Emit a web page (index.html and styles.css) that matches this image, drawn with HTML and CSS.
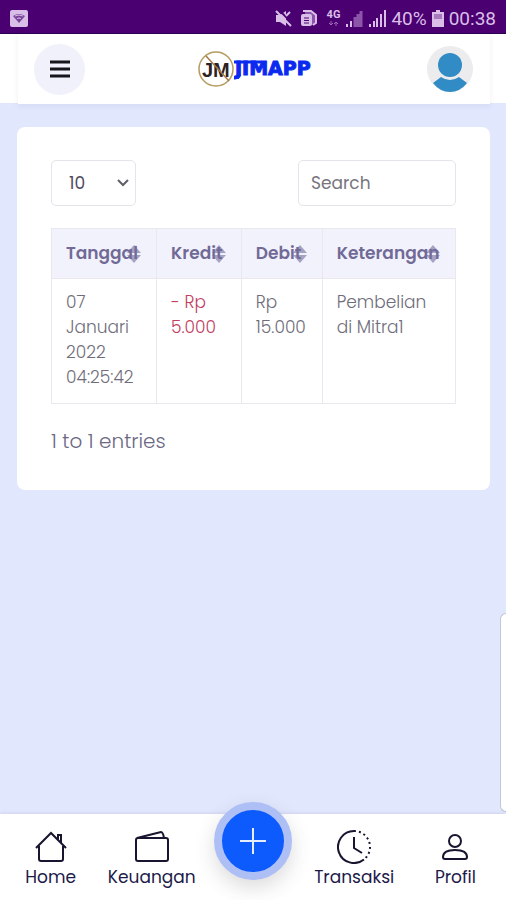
FILE: index.html
```html
<!DOCTYPE html>
<html lang="id">
<head>
<meta charset="utf-8">
<meta name="viewport" content="width=device-width, initial-scale=1">
<title>JIMAPP</title>
<link rel="stylesheet" href="styles.css">
</head>
<body>
<div class="status">
  <svg class="status-note" width="18" height="17" viewBox="0 0 18 17" aria-hidden="true">
    <rect width="18" height="17" rx="2" fill="#d9bfe8"/>
    <path d="M3 6q6-4 12 0L9 13z" fill="#77459a"/><path d="M5 6q4-2 8 0M7 8.500q2-1 4 0" stroke="#d9bfe8" fill="none"/>
  </svg>
  <div class="status-right">
    <svg width="17" height="17" viewBox="0 0 17 17" fill="#d9bfe8" aria-hidden="true">
      <path d="M1 5h4l6-4v15l-6-4H1z"/><path d="M4 0l13 13" stroke="#4b0072" stroke-width="2"/><path d="M1 1l15 15M11 6l4-4" stroke="#d9bfe8" stroke-width="2"/>
    </svg>
    <svg class="gap-docs" width="17" height="17" viewBox="0 0 17 17" aria-hidden="true">
      <path d="M5 1h7l4 4v8l-2 2H5z" fill="#8d55aa"/><rect x="1" y="4" width="11" height="12" rx="2" fill="#d9bfe8"/><path d="M4 8h5M4 10.500h5M4 13h5" stroke="#4b0072"/><path d="M3 1h8l5 4v8l-3 2" fill="none" stroke="#d9bfe8" stroke-width="2"/>
    </svg>
    <span class="network"><span>4G</span><svg width="10" height="5" viewBox="0 0 10 5" aria-hidden="true"><path d="M3 0v4M1 2l2 2 2-2M8 5V1M6 3l2-2 2 2" fill="none" stroke="#9e68bb"/></svg></span>
    <svg class="gap-signal" width="18" height="17" viewBox="0 0 18 17" aria-hidden="true"><path d="M2 14v3M6 11v6" stroke="#d9bfe8" stroke-width="2"/><path d="M10 7v10M13 4v13M16 1v16" stroke="#8d55aa" stroke-width="3"/></svg>
    <svg class="gap-signal" width="18" height="17" viewBox="0 0 18 17" aria-hidden="true"><path d="M2 14v3M6 11v6M9 8v9M13 4v13M17 0v17" stroke="#d9bfe8" stroke-width="2"/></svg>
    <span class="percent">40%</span>
    <svg class="battery" width="12" height="17" viewBox="0 0 12 17" aria-hidden="true"><path d="M4 0h4v2h4v15H0V2h4z" fill="#d9bfe8"/><path d="M2 4h8v5H2z" fill="#a77abe"/></svg>
    <span class="clock">00:38</span>
  </div>
</div>
<header class="header">
  <div class="topbar">
    <button class="menu" type="button" aria-label="Menu">
      <svg width="20" height="18" viewBox="0 0 20 18" aria-hidden="true"><path d="M0 2h20M0 9h20M0 16h20" stroke="#17151c" stroke-width="3"/></svg>
    </button>
    <a class="brand" href="#">
      <svg width="36" height="36" viewBox="0 0 36 36" aria-hidden="true">
        <circle cx="18" cy="18" r="17" fill="#fff" stroke="#b49c61" stroke-width="1.500"/>
        <text x="4" y="26" class="mark">JM</text>
        <path d="M8 5l23 25" stroke="#a57b49" stroke-width="1.500"/>
      </svg>
      <svg class="wordmark" width="80" height="24" viewBox="0 0 80 24" aria-label="JIMAPP">
        <text x="1" y="18">JIMAPP</text>
        <path d="M0 5h28M6 17l-3 4" stroke="#0a2af0" stroke-width="3"/>
      </svg>
    </a>
    <a class="avatar" href="#" aria-label="Profil">
      <svg width="46" height="46" viewBox="0 0 46 46" aria-hidden="true"><circle cx="23" cy="23" r="23" fill="#ececee"/><circle cx="23" cy="19" r="12" fill="#318bc4"/><path d="M6 37l8-6q9 6 18 0l8 6q-7 9-17 9T6 37z" fill="#318bc4"/></svg>
    </a>
  </div>
</header>
<main class="main">
  <section class="card">
    <div class="tools">
      <select class="length" aria-label="Entries per page"><option>10</option><option>25</option><option>50</option></select>
      <input class="search" type="search" placeholder="Search" aria-label="Search">
    </div>
    <table class="table">
      <colgroup><col class="col-date"><col class="col-credit"><col class="col-debit"><col class="col-note"></colgroup>
      <thead><tr>
        <th><div class="head">Tanggal<span class="sort"></span></div></th>
        <th><div class="head">Kredit<span class="sort"></span></div></th>
        <th><div class="head">Debit<span class="sort"></span></div></th>
        <th><div class="head">Keterangan<span class="sort"></span></div></th>
      </tr></thead>
      <tbody><tr>
        <td>07 Januari 2022 04:25:42</td>
        <td class="minus">- Rp 5.000</td>
        <td>Rp 15.000</td>
        <td>Pembelian di Mitra1</td>
      </tr></tbody>
    </table>
    <p class="info">1 to 1 entries</p>
  </section>
</main>
<div class="edge"></div>
<nav class="nav">
  <a class="item" href="#">
    <svg width="34" height="34" viewBox="0 0 34 34" aria-hidden="true"><path d="M2 18L17 3l15 15M5 16v13q0 2 2 2h20q2 0 2-2V16M24 10V5h3v8"/></svg>
    <span>Home</span>
  </a>
  <a class="item" href="#">
    <svg width="34" height="34" viewBox="0 0 34 34" aria-hidden="true"><rect x="1" y="8" width="32" height="23" rx="2"/><path d="M2 8L26 2q2 0 3 6"/></svg>
    <span>Keuangan</span>
  </a>
  <div class="center"><button class="fab" type="button" aria-label="Tambah"><svg width="26" height="26" viewBox="0 0 26 26" aria-hidden="true"><path d="M13 0v26M0 13h26" stroke="#e5edff" stroke-width="2"/></svg></button></div>
  <a class="item" href="#">
    <svg width="34" height="34" viewBox="0 0 34 34" aria-hidden="true"><path d="M17 1a16 16 0 1 0 10 28.500M17 7v11l8 5"/><path d="M17 1a16 16 0 0 1 10 28.500" stroke-dasharray="2 3"/></svg>
    <span>Transaksi</span>
  </a>
  <a class="item" href="#">
    <svg width="34" height="34" viewBox="0 0 34 34" aria-hidden="true"><circle cx="17" cy="11" r="6"/><path d="M5 27q0-7 12-7t12 7q0 2-2 2H7q-2 0-2-2z"/></svg>
    <span>Profil</span>
  </a>
</nav>
</body>
</html>
```
FILE: styles.css
```css
* { box-sizing: border-box; }
body {
  margin: 0;
  min-height: 100vh;
  display: flex;
  flex-direction: column;
  position: relative;
  background: #e1e7fd;
  color: #77748a;
  font-family: Poppins, Inter, sans-serif;
  font-size: 17px;
}
svg { display: block; flex: none; }
a { color: inherit; text-decoration: none; }
button { padding: 0; border: 0; cursor: pointer; }

.status {
  height: 34px;
  padding: 3px 10px 0;
  display: flex;
  align-items: center;
  justify-content: space-between;
  background: #4b0072;
  border-bottom: 1px solid #280052;
  color: #d9bfe8;
  font-family: Roboto, sans-serif;
}
.status-right { display: flex; align-items: center; }
.gap-docs { margin-left: 8px; }
.network { margin: 0 0 0 10px; display: flex; flex-direction: column; align-items: center; gap: 2px; font-size: 11px; line-height: 9px; font-weight: 700; }
.gap-signal { margin-left: 5px; }
.percent { margin-left: 5px; font-size: 19px; }
.battery { margin: 0 5px; }
.clock { font-size: 19px; }

.header { padding: 0 16px 0 18px; height: 69px; background: #fff; }
.topbar {
  height: 70px;
  padding: 0 17px 0 16px;
  display: flex;
  align-items: center;
  justify-content: space-between;
  background: #fff;
  box-shadow: 0 2px 6px rgba(60, 60, 110, .08);
}
.menu { width: 51px; height: 51px; border-radius: 50%; background: #f1f1fb; display: grid; place-items: center; }
.brand { display: flex; align-items: center; }
.mark { font: 700 20px "Liberation Sans", sans-serif; fill: #2c211e; }
.wordmark { font: 700 19px "DejaVu Sans", sans-serif; fill: #0a2af0; }
.wordmark text { stroke: #0a2af0; stroke-width: 1px; }

.main { flex: 1; padding: 24px 16px 24px 17px; }
.card { padding: 33px 34px; border-radius: 8px; background: #fff; }
.tools { display: flex; justify-content: space-between; }
.length, .search {
  height: 46px;
  border: 1px solid #e4e4ea;
  border-radius: 5px;
  background-color: #fff;
  font: inherit;
  outline: 0;
}
.length {
  width: 85px;
  padding: 0 17px;
  appearance: none;
  color: #4e4a5e;
  background-image: url("data:image/svg+xml,%3Csvg xmlns='http://www.w3.org/2000/svg' width='12' height='8' fill='none' stroke='%23605e69' stroke-width='2'%3E%3Cpath d='M1 1l5 5 5-5'/%3E%3C/svg%3E");
  background-repeat: no-repeat;
  background-position: right 6px center;
}
.search { width: 158px; padding: 0 12px; appearance: none; color: #66646f; }
.search::placeholder { color: #77757d; opacity: 1; }

.table { width: 100%; margin-top: 22px; border-collapse: collapse; table-layout: fixed; line-height: 25px; }
.col-date { width: 26%; }
.col-credit { width: 21%; }
.col-debit { width: 20%; }
.col-note { width: 33%; }
.table th, .table td { border: 1px solid #e9e8ef; text-align: left; vertical-align: top; }
.table th { padding: 12px 14px; background: #f2f2fd; color: #716a96; font-weight: 600; white-space: nowrap; }
.table td { padding: 11px 10px 13px 14px; font-weight: 300; color: #6f6d7a; }
.table .minus { color: #c0405f; }
.head { position: relative; }
.sort { position: absolute; right: 1px; top: 4px; width: 14px; height: 18px; opacity: .6; }
.sort::before, .sort::after { content: ""; display: block; border: 7px solid transparent; border-top: 0; border-bottom: 8px solid #746d9d; }
.sort::after { margin-top: 2px; border-top: 8px solid #746d9d; border-bottom: 0; }
.info { margin: 23px 0 0; padding-bottom: 2px; font-size: 20px; line-height: 28px; font-weight: 300; color: #6b6883; }

.edge {
  position: absolute;
  right: 0;
  bottom: 88px;
  width: 6px;
  height: 199px;
  border: 1px solid #c3c6d4;
  border-right: 0;
  border-radius: 6px 0 0 6px;
  background: #fff;
}
.nav {
  height: 86px;
  display: grid;
  grid-template-columns: repeat(5, 1fr);
  position: sticky;
  bottom: 0;
  background: #fff;
  color: #211a49;
  box-shadow: 0 -1px 3px rgba(60, 60, 110, .1);
}
.item { padding-top: 16px; display: flex; flex-direction: column; align-items: center; gap: 1px; line-height: 24px; }
.item svg { fill: none; stroke: #19142f; stroke-width: 2; }
.center { display: flex; justify-content: center; }
.fab {
  width: 78px;
  height: 78px;
  margin-top: -12px;
  flex: none;
  border: 8px solid #aebff5;
  border-radius: 50%;
  background: #0d5bfd;
  display: grid;
  place-items: center;
  box-shadow: 0 8px 20px rgba(60, 60, 60, .18);
}
```
